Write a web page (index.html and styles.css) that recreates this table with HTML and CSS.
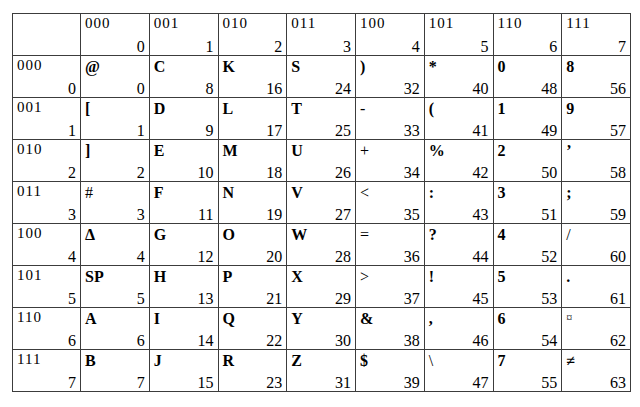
FILE: index.html
```html
<!DOCTYPE html>
<html>
<head>
<meta charset="utf-8">
<link rel="stylesheet" href="styles.css">
</head>
<body>
<div class="page">
<table class="codes">
<colgroup><col class="c0"><col><col><col><col><col><col><col><col></colgroup>
<tr>
<td></td>
<td><div class="cell"><div class="lab">000</div><div class="num">0</div></div></td>
<td><div class="cell"><div class="lab">001</div><div class="num">1</div></div></td>
<td><div class="cell"><div class="lab">010</div><div class="num">2</div></div></td>
<td><div class="cell"><div class="lab">011</div><div class="num">3</div></div></td>
<td><div class="cell"><div class="lab">100</div><div class="num">4</div></div></td>
<td><div class="cell"><div class="lab">101</div><div class="num">5</div></div></td>
<td><div class="cell"><div class="lab">110</div><div class="num">6</div></div></td>
<td><div class="cell"><div class="lab">111</div><div class="num">7</div></div></td>
</tr>
<tr>
<td><div class="cell"><div class="lab">000</div><div class="num">0</div></div></td>
<td><div class="cell"><div class="ch">@</div><div class="num">0</div></div></td>
<td><div class="cell"><div class="ch">C</div><div class="num">8</div></div></td>
<td><div class="cell"><div class="ch">K</div><div class="num">16</div></div></td>
<td><div class="cell"><div class="ch">S</div><div class="num">24</div></div></td>
<td><div class="cell"><div class="ch">)</div><div class="num">32</div></div></td>
<td><div class="cell"><div class="ch">*</div><div class="num">40</div></div></td>
<td><div class="cell"><div class="ch">0</div><div class="num">48</div></div></td>
<td><div class="cell"><div class="ch">8</div><div class="num">56</div></div></td>
</tr>
<tr>
<td><div class="cell"><div class="lab">001</div><div class="num">1</div></div></td>
<td><div class="cell"><div class="ch">[</div><div class="num">1</div></div></td>
<td><div class="cell"><div class="ch">D</div><div class="num">9</div></div></td>
<td><div class="cell"><div class="ch">L</div><div class="num">17</div></div></td>
<td><div class="cell"><div class="ch">T</div><div class="num">25</div></div></td>
<td><div class="cell"><div class="ch thin">-</div><div class="num">33</div></div></td>
<td><div class="cell"><div class="ch">(</div><div class="num">41</div></div></td>
<td><div class="cell"><div class="ch">1</div><div class="num">49</div></div></td>
<td><div class="cell"><div class="ch">9</div><div class="num">57</div></div></td>
</tr>
<tr>
<td><div class="cell"><div class="lab">010</div><div class="num">2</div></div></td>
<td><div class="cell"><div class="ch">]</div><div class="num">2</div></div></td>
<td><div class="cell"><div class="ch">E</div><div class="num">10</div></div></td>
<td><div class="cell"><div class="ch">M</div><div class="num">18</div></div></td>
<td><div class="cell"><div class="ch">U</div><div class="num">26</div></div></td>
<td><div class="cell"><div class="ch thin">+</div><div class="num">34</div></div></td>
<td><div class="cell"><div class="ch">%</div><div class="num">42</div></div></td>
<td><div class="cell"><div class="ch">2</div><div class="num">50</div></div></td>
<td><div class="cell"><div class="ch">’</div><div class="num">58</div></div></td>
</tr>
<tr>
<td><div class="cell"><div class="lab">011</div><div class="num">3</div></div></td>
<td><div class="cell"><div class="ch thin">#</div><div class="num">3</div></div></td>
<td><div class="cell"><div class="ch">F</div><div class="num">11</div></div></td>
<td><div class="cell"><div class="ch">N</div><div class="num">19</div></div></td>
<td><div class="cell"><div class="ch">V</div><div class="num">27</div></div></td>
<td><div class="cell"><div class="ch thin">&lt;</div><div class="num">35</div></div></td>
<td><div class="cell"><div class="ch">:</div><div class="num">43</div></div></td>
<td><div class="cell"><div class="ch">3</div><div class="num">51</div></div></td>
<td><div class="cell"><div class="ch">;</div><div class="num">59</div></div></td>
</tr>
<tr>
<td><div class="cell"><div class="lab">100</div><div class="num">4</div></div></td>
<td><div class="cell"><div class="ch">Δ</div><div class="num">4</div></div></td>
<td><div class="cell"><div class="ch">G</div><div class="num">12</div></div></td>
<td><div class="cell"><div class="ch">O</div><div class="num">20</div></div></td>
<td><div class="cell"><div class="ch">W</div><div class="num">28</div></div></td>
<td><div class="cell"><div class="ch thin">=</div><div class="num">36</div></div></td>
<td><div class="cell"><div class="ch">?</div><div class="num">44</div></div></td>
<td><div class="cell"><div class="ch">4</div><div class="num">52</div></div></td>
<td><div class="cell"><div class="ch thin">/</div><div class="num">60</div></div></td>
</tr>
<tr>
<td><div class="cell"><div class="lab">101</div><div class="num">5</div></div></td>
<td><div class="cell"><div class="ch">SP</div><div class="num">5</div></div></td>
<td><div class="cell"><div class="ch">H</div><div class="num">13</div></div></td>
<td><div class="cell"><div class="ch">P</div><div class="num">21</div></div></td>
<td><div class="cell"><div class="ch">X</div><div class="num">29</div></div></td>
<td><div class="cell"><div class="ch thin">&gt;</div><div class="num">37</div></div></td>
<td><div class="cell"><div class="ch">!</div><div class="num">45</div></div></td>
<td><div class="cell"><div class="ch">5</div><div class="num">53</div></div></td>
<td><div class="cell"><div class="ch">.</div><div class="num">61</div></div></td>
</tr>
<tr>
<td><div class="cell"><div class="lab">110</div><div class="num">6</div></div></td>
<td><div class="cell"><div class="ch">A</div><div class="num">6</div></div></td>
<td><div class="cell"><div class="ch">I</div><div class="num">14</div></div></td>
<td><div class="cell"><div class="ch">Q</div><div class="num">22</div></div></td>
<td><div class="cell"><div class="ch">Y</div><div class="num">30</div></div></td>
<td><div class="cell"><div class="ch">&amp;</div><div class="num">38</div></div></td>
<td><div class="cell"><div class="ch">,</div><div class="num">46</div></div></td>
<td><div class="cell"><div class="ch">6</div><div class="num">54</div></div></td>
<td><div class="cell"><div class="ch thin small">¤</div><div class="num">62</div></div></td>
</tr>
<tr>
<td><div class="cell"><div class="lab">111</div><div class="num">7</div></div></td>
<td><div class="cell"><div class="ch">B</div><div class="num">7</div></div></td>
<td><div class="cell"><div class="ch">J</div><div class="num">15</div></div></td>
<td><div class="cell"><div class="ch">R</div><div class="num">23</div></div></td>
<td><div class="cell"><div class="ch">Z</div><div class="num">31</div></div></td>
<td><div class="cell"><div class="ch">$</div><div class="num">39</div></div></td>
<td><div class="cell"><div class="ch thin">\</div><div class="num">47</div></div></td>
<td><div class="cell"><div class="ch">7</div><div class="num">55</div></div></td>
<td><div class="cell"><div class="ch">≠</div><div class="num">63</div></div></td>
</tr>
</table>
</div>
</body>
</html>
```
FILE: styles.css
```css
html, body {
  margin: 0;
  padding: 0;
  background: #ffffff;
}
.page {
  padding: 13px 0 0 12px;
}
.codes {
  border-collapse: collapse;
  table-layout: fixed;
  width: 619px;
  font-family: "Liberation Serif", "DejaVu Serif", serif;
  color: #000;
}
.codes col.c0 {
  width: 68px;
}
.codes td {
  border: 1px solid #3c3c3c;
  padding: 0;
  height: 41px;
  vertical-align: top;
}
.cell {
  height: 41px;
  display: flex;
  flex-direction: column;
  justify-content: space-between;
  padding: 1px 4px 0 4px;
  box-sizing: border-box;
}
.lab {
  font-size: 15px;
  line-height: 16px;
  letter-spacing: 1px;
}
.ch {
  font-size: 16px;
  line-height: 17px;
  font-weight: bold;
  padding-top: 1px;
}
.ch.thin {
  font-weight: normal;
}
.ch.small {
  font-size: 12px;
}
.num {
  font-size: 16px;
  line-height: 17px;
  text-align: right;
}
```
